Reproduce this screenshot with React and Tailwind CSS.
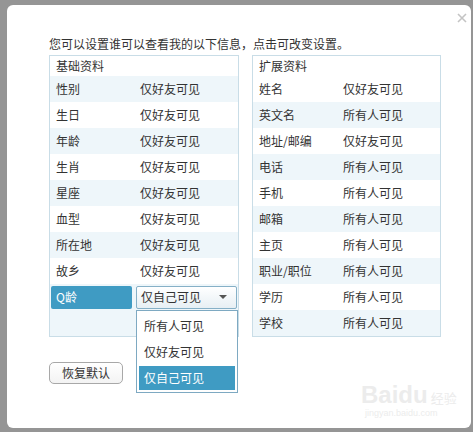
import React from 'react';

const FONT = { fontFamily: '"Microsoft YaHei", "Noto Sans CJK SC", "Noto Sans", sans-serif' };

const BASIC = [
  ['性别', '仅好友可见'],
  ['生日', '仅好友可见'],
  ['年龄', '仅好友可见'],
  ['生肖', '仅好友可见'],
  ['星座', '仅好友可见'],
  ['血型', '仅好友可见'],
  ['所在地', '仅好友可见'],
  ['故乡', '仅好友可见'],
];

const EXTRA = [
  ['姓名', '仅好友可见'],
  ['英文名', '所有人可见'],
  ['地址/邮编', '仅好友可见'],
  ['电话', '所有人可见'],
  ['手机', '所有人可见'],
  ['邮箱', '所有人可见'],
  ['主页', '所有人可见'],
  ['职业/职位', '所有人可见'],
  ['学历', '所有人可见'],
  ['学校', '所有人可见'],
];

function Row({ label, value, striped }) {
  return (
    <div className={`flex items-center h-[26px] ${striped ? 'bg-[#eef6fa]' : 'bg-white'}`}>
      <span className="w-[90px] pl-[6px] shrink-0">{label}</span>
      <span>{value}</span>
    </div>
  );
}

export default function App() {
  return (
    <div className="w-[473px] h-[432px] bg-[#959595] pt-[5px] pl-[7px] overflow-hidden text-[12px] text-[#333]" style={FONT}>
      <div className="relative w-[464px] h-[423px] bg-white rounded-[6px] pl-[42px]">
        {/* close */}
        <svg className="absolute right-[4px] top-[8px]" width="10" height="10" viewBox="0 0 10 10">
          <path d="M1 1 L9 9 M9 1 L1 9" stroke="#c4c4c4" strokeWidth="1.6" />
        </svg>

        <p className="pt-[29px] h-[49px] leading-[20px]">您可以设置谁可以查看我的以下信息，点击可改变设置。</p>

        <div className="flex gap-[13px] mt-[1px]">
          {/* left panel */}
          <div className="relative w-[190px] border border-[#c9dde7]">
            <div className="h-[20px] flex items-center pl-[6px]">基础资料</div>
            {BASIC.map(([l, v], i) => (
              <Row key={l} label={l} value={v} striped={i % 2 === 0} />
            ))}
            <div className="flex items-center h-[26px] bg-[#eef6fa] pl-[1px] gap-[4px]">
              <div className="w-[81px] h-[23px] rounded-[2px] bg-[#3f9bc3] text-white flex items-center pl-[5px]">Q龄</div>
              <div className="flex-1 h-[23px] mr-[1px] rounded-[2px] border border-[#86b0c7] bg-gradient-to-b from-white to-[#e7eff4] flex items-center justify-between pl-[4px] pr-[9px]">
                <span>仅自己可见</span>
                <svg width="8" height="4" viewBox="0 0 8 4">
                  <path d="M0 0 H8 L4 4 Z" fill="#555" />
                </svg>
              </div>
            </div>
            <div className="h-[26px] bg-[#eef6fa]" />

            {/* dropdown */}
            <div className="absolute left-[86px] top-[254px] w-[102px] border border-[#7ea9c2] bg-white p-[2px]">
              <div className="h-[26px] flex items-center pl-[5px]">所有人可见</div>
              <div className="h-[26px] flex items-center pl-[5px]">仅好友可见</div>
              <div className="h-[24px] mt-[1px] flex items-center pl-[5px] bg-[#3f9bc3] text-white">仅自己可见</div>
            </div>
          </div>

          {/* right panel */}
          <div className="w-[189px] border border-[#c9dde7]">
            <div className="h-[20px] flex items-center pl-[6px]">扩展资料</div>
            {EXTRA.map(([l, v], i) => (
              <Row key={l} label={l} value={v} striped={i % 2 === 1} />
            ))}
          </div>
        </div>

        <button className="mt-[25px] w-[74px] h-[22px] rounded-[5px] border border-[#a8a8a8] bg-gradient-to-b from-white to-[#f3f3f3] text-[12px] text-[#333] flex items-center justify-center">
          恢复默认
        </button>

        {/* watermark */}
        <div className="absolute left-[354px] top-[378px] text-[#ececec] leading-none select-none">
          <div className="flex items-end gap-[3px]">
            <span className="text-[24px] font-bold" style={{ fontFamily: '"Liberation Sans", sans-serif' }}>Baidu</span>
            <span className="text-[13px] pb-[3px]">经验</span>
          </div>
          <div className="text-[9px] mt-[2px] pl-[4px]" style={{ fontFamily: '"Liberation Sans", sans-serif' }}>jingyan.baidu.com</div>
        </div>
      </div>
    </div>
  );
}
